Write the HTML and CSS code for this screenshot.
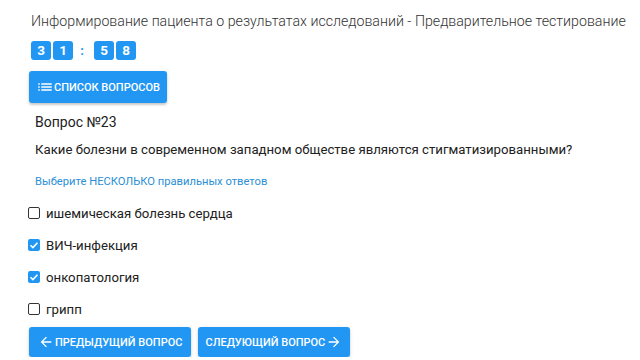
FILE: index.html
```html
<!DOCTYPE html>
<html lang="ru">
<head>
    <meta charset="UTF-8">
    <meta name="viewport" content="width=device-width, initial-scale=1.0">
    <title>Предварительное тестирование</title>
    <link rel="stylesheet" href="styles.css">
</head>
<body>

    <div class="page">
        <h1 class="test-title">Информирование пациента о результатах исследований - Предварительное тестирование</h1>

        <!-- Timer -->
        <div class="timer">
            <span class="digit">3</span>
            <span class="digit">1</span>
            <span class="colon">:</span>
            <span class="digit">5</span>
            <span class="digit">8</span>
        </div>

        <button class="btn btn-list">
            <svg class="icon" viewBox="0 0 24 24" width="18" height="18"><path fill="currentColor" d="M3 13h2v-2H3v2zm0 4h2v-2H3v2zm0-8h2V7H3v2zm4 4h14v-2H7v2zm0 4h14v-2H7v2zM7 7v2h14V7H7z"/></svg>
            Список вопросов
        </button>

        <!-- Question -->
        <div class="question">
            <h2 class="question-num">Вопрос №23</h2>
            <p class="question-text">Какие болезни в современном западном обществе являются стигматизированными?</p>
            <p class="hint">Выберите НЕСКОЛЬКО правильных ответов</p>
        </div>

        <div class="answers">
            <label class="answer"><span class="box"></span>ишемическая болезнь сердца</label>
            <label class="answer"><span class="box checked"><svg viewBox="0 0 12 12" width="12" height="12"><path d="M2.5 6.2l2.4 2.4 4.6-4.9" fill="none" stroke="#fff" stroke-width="1.6"/></svg></span>ВИЧ-инфекция</label>
            <label class="answer"><span class="box checked"><svg viewBox="0 0 12 12" width="12" height="12"><path d="M2.5 6.2l2.4 2.4 4.6-4.9" fill="none" stroke="#fff" stroke-width="1.6"/></svg></span>онкопатология</label>
            <label class="answer"><span class="box"></span>грипп</label>
        </div>

        <div class="nav">
            <button class="btn btn-nav btn-prev">
                <svg class="arrow" viewBox="0 0 24 24" width="16" height="16"><path fill="currentColor" d="M20 11H7.83l5.59-5.59L12 4l-8 8 8 8 1.41-1.41L7.83 13H20v-2z"/></svg>
                Предыдущий вопрос
            </button>
            <button class="btn btn-nav btn-next">
                Следующий вопрос
                <svg class="arrow" viewBox="0 0 24 24" width="16" height="16"><path fill="currentColor" d="M12 4l-1.41 1.41L16.17 11H4v2h12.17l-5.58 5.59L12 20l8-8z"/></svg>
            </button>
        </div>
    </div>

</body>
</html>
```

FILE: styles.css
```css
body {
    margin: 0;
    padding: 0;
    background-color: #fff;
    font-family: Roboto, "Liberation Sans", sans-serif;
    color: #212121;
}

.page {
    padding: 11px 0 0 29px;
}

.test-title {
    margin: 0 0 0 2px;
    font-size: 14.2px;
    font-weight: 300;
    line-height: 20px;
    color: #333;
    white-space: nowrap;
}

.timer {
    display: flex;
    align-items: center;
    gap: 2px;
    margin: 10px 0 0 2px;
}

.digit {
    width: 20px;
    height: 19px;
    line-height: 19px;
    text-align: center;
    background-color: #2196f3;
    color: #fff;
    font-weight: 700;
    font-size: 13.5px;
    border-radius: 3px;
}

.colon {
    width: 14px;
    text-align: center;
    font-weight: 700;
    font-size: 13px;
    color: #2196f3;
    margin: 0 3px 0 0;
}

.btn {
    display: inline-flex;
    align-items: center;
    border: none;
    border-radius: 3px;
    background-color: #2196f3;
    color: #fff;
    font-family: Roboto, "Liberation Sans", sans-serif;
    font-size: 11px;
    font-weight: 500;
    text-transform: uppercase;
    cursor: pointer;
    box-shadow: 0 2px 2px rgba(0, 0, 0, 0.14), 0 1px 4px rgba(0, 0, 0, 0.12);
}

.btn-list {
    margin-top: 11px;
    height: 32px;
    padding: 0 7px 0 7px;
}

.question {
    padding-left: 6px;
}

.question-num {
    margin: 9px 0 0;
    font-size: 14px;
    font-weight: 400;
    line-height: 20px;
}

.question-text {
    margin: 8px 0 0;
    font-size: 13.2px;
    line-height: 20px;
}

.hint {
    margin: 14px 0 0;
    font-size: 11.2px;
    line-height: 16px;
    color: #2b8fd6;
}

.answers {
    margin-top: 7px;
}

.answer {
    display: flex;
    align-items: center;
    height: 32px;
    font-size: 13.2px;
    color: #212121;
}

.box {
    box-sizing: border-box;
    width: 12px;
    height: 12px;
    margin: 0 6px 0 -1px;
    border: 1.5px solid #333;
    border-radius: 2px;
    display: flex;
}

.box.checked {
    border: none;
    background-color: #2196f3;
}

.nav {
    display: flex;
    gap: 7px;
    margin-top: 2px;
}

.btn-nav {
    height: 30px;
    gap: 1px;
}

.btn-prev {
    padding: 0 9px 0 9px;
}

.btn-next {
    padding: 0 8px 0 7px;
}
```
